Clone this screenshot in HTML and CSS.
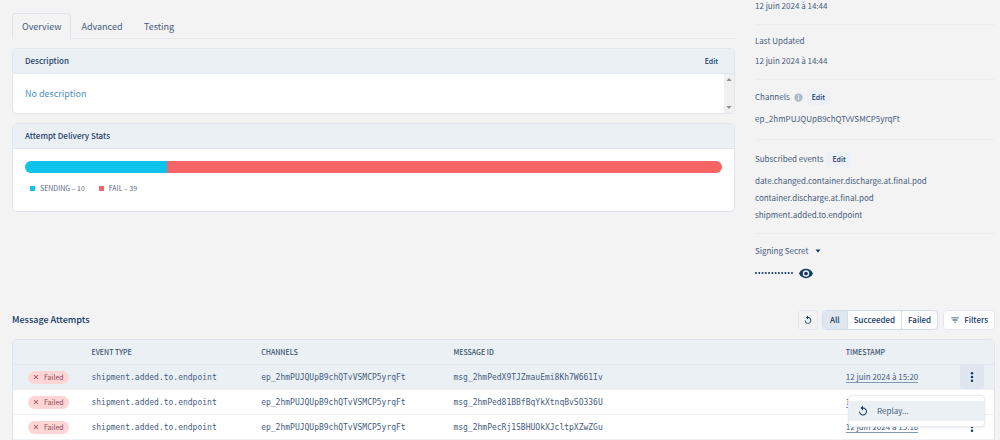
FILE: index.html
```html
<!DOCTYPE html>
<html lang="en">
<head>
<meta charset="utf-8">
<title>Endpoint</title>
<link rel="stylesheet" href="styles.css">
</head>
<body>
<svg class="defs" aria-hidden="true">
  <symbol id="replay" viewBox="0 0 24 24"><path d="M12 5V1L7 6l5 5V7c3.300 0 6 2.700 6 6s-2.700 6-6 6-6-2.700-6-6H4c0 4.400 3.600 8 8 8s8-3.600 8-8-3.600-8-8-8z"/></symbol>
  <symbol id="dots" viewBox="0 0 24 24"><circle cx="12" cy="3" r="3"/><circle cx="12" cy="12" r="3"/><circle cx="12" cy="21" r="3"/></symbol>
  <symbol id="cross" viewBox="0 0 24 24"><path d="M19 6.400 17.600 5 12 10.600 6.400 5 5 6.400 10.600 12 5 17.600 6.400 19 12 13.400 17.600 19 19 17.600 13.400 12z"/></symbol>
</svg>
<main class="page">
  <div class="columns">
    <div class="primary">
      <nav class="tabs">
        <button class="tab tab-active">Overview</button>
        <button class="tab">Advanced</button>
        <button class="tab">Testing</button>
      </nav>
      <section class="card">
        <header class="card-head"><h2>Description</h2><button class="edit edit-plain">Edit</button></header>
        <div class="description">
          <p>No description</p>
          <div class="scrollbar">
            <svg viewBox="0 0 10 6"><path d="M5 1 7.500 4h-5z"/></svg>
            <svg viewBox="0 0 10 6"><path d="M5 5 7.500 2h-5z"/></svg>
          </div>
        </div>
      </section>
      <section class="card">
        <header class="card-head"><h2>Attempt Delivery Stats</h2></header>
        <div class="stats">
          <div class="bar"><span class="sending" style="width:20.4%"></span><span class="fail"></span></div>
          <ul class="legend">
            <li><i class="sending"></i>SENDING – 10</li>
            <li><i class="fail"></i>FAIL – 39</li>
          </ul>
        </div>
      </section>
    </div>
    <aside class="details">
      <section class="created"><p>12 juin 2024 à 14:44</p></section>
      <section class="updated"><h3>Last Updated</h3><p>12 juin 2024 à 14:44</p></section>
      <section class="channels">
        <div class="label-row"><h3>Channels</h3>
          <svg class="info" viewBox="0 0 24 24"><path fill-rule="evenodd" d="M12 1a11 11 0 1 0 0 22 11 11 0 0 0 0-22zm-1.500 5h3v3h-3zm0 5h3v7h-3z"/></svg>
          <button class="edit">Edit</button></div>
        <p>ep_2hmPUJQUpB9chQTvVSMCP5yrqFt</p>
      </section>
      <section class="events">
        <div class="label-row"><h3>Subscribed events</h3><button class="edit">Edit</button></div>
        <ul><li>date.changed.container.discharge.at.final.pod</li><li>container.discharge.at.final.pod</li><li>shipment.added.to.endpoint</li></ul>
      </section>
      <section class="secret">
        <button class="label-row secret-toggle">Signing Secret<svg viewBox="0 0 10 10"><path d="M2.500 3.500h5L5 6.500z"/></svg></button>
        <div class="secret-value"><svg class="mask" viewBox="0 0 39 4"><path d="M1 2h37" stroke-dasharray="0 3.270"/></svg>
          <button class="reveal" aria-label="Show secret"><svg viewBox="0 0 24 18"><path fill-rule="evenodd" d="M12 1C6.500 1 2 4.300 0 9c2 4.700 6.500 8 12 8s10-3.300 12-8c-2-4.700-6.500-8-12-8zm0 13.500a5.500 5.500 0 1 1 0-11 5.500 5.500 0 0 1 0 11z"/><circle cx="12" cy="9" r="3.200"/></svg></button>
        </div>
      </section>
    </aside>
  </div>

  <div class="attempts-head">
    <h1>Message Attempts</h1>
    <button class="tool refresh" aria-label="Refresh"><svg><use href="#replay"/></svg></button>
    <div class="segments"><button class="selected">All</button><button>Succeeded</button><button>Failed</button></div>
    <button class="tool filters"><svg viewBox="0 0 24 24"><path d="M10 18h4v-2h-4zM3 6v2h18V6zm3 7h12v-2H6z"/></svg>Filters</button>
  </div>

  <div class="table-wrap">
    <table>
      <colgroup><col class="c-status"><col class="c-type"><col class="c-channel"><col class="c-id"><col class="c-time"><col class="c-menu"></colgroup>
      <thead><tr><th></th><th>EVENT TYPE</th><th>CHANNELS</th><th>MESSAGE ID</th><th>TIMESTAMP</th><th></th></tr></thead>
      <tbody>
        <tr class="active">
          <td><span class="badge"><svg><use href="#cross"/></svg>Failed</span></td>
          <td class="code">shipment.added.to.endpoint</td><td class="code">ep_2hmPUJQUpB9chQTvVSMCP5yrqFt</td><td class="code">msg_2hmPedX9TJZmauEmi8Kh7W661Iv</td>
          <td><time>12 juin 2024 à 15:20</time></td>
          <td class="menu-cell"><button class="more" aria-label="Actions"><svg><use href="#dots"/></svg></button>
            <div class="menu"><button><svg><use href="#replay"/></svg>Replay...</button></div></td>
        </tr>
        <tr>
          <td><span class="badge"><svg><use href="#cross"/></svg>Failed</span></td>
          <td class="code">shipment.added.to.endpoint</td><td class="code">ep_2hmPUJQUpB9chQTvVSMCP5yrqFt</td><td class="code">msg_2hmPed81BBfBqYkXtnqBvSO336U</td>
          <td><time>12 juin 2024 à 15:19</time></td>
          <td class="menu-cell"><button class="more" aria-label="Actions"><svg><use href="#dots"/></svg></button></td>
        </tr>
        <tr>
          <td><span class="badge"><svg><use href="#cross"/></svg>Failed</span></td>
          <td class="code">shipment.added.to.endpoint</td><td class="code">ep_2hmPUJQUpB9chQTvVSMCP5yrqFt</td><td class="code">msg_2hmPecRj1SBHUOkXJcltpXZwZGu</td>
          <td><time>12 juin 2024 à 15:18</time></td>
          <td class="menu-cell"><button class="more" aria-label="Actions"><svg><use href="#dots"/></svg></button></td>
        </tr>
      </tbody>
    </table>
  </div>
</main>
</body>
</html>
```
FILE: styles.css
```css
* { box-sizing: border-box; }
body { margin: 0; background: #f3f3f3; color: #455c7e; font: 8px/14px "Noto Sans CJK JP", "Noto Sans", sans-serif; overflow: hidden; }
h1, h2, h3, p, ul { margin: 0; padding: 0; font-size: inherit; font-weight: 400; list-style: none; }
button { margin: 0; padding: 0; border: 0; background: none; color: inherit; font: inherit; cursor: pointer; }
svg { display: block; fill: #123a68; flex: none; }
.defs { position: absolute; width: 0; height: 0; }
.page { padding: 0 5px 0 12px; }

.columns { display: grid; grid-template-columns: minmax(0, 1fr) 240px; gap: 20px; }
.primary { padding-top: 13px; min-width: 0; }

.tabs { display: flex; border-bottom: 1px solid #e6e8ee; margin-bottom: 9px; }
.tab { min-width: 53px; height: 26px; margin-bottom: -1px; padding: 2px 9px 0; border: 1px solid transparent; font-size: 9px; }
.tab-active { border-color: #e1e4ec; border-bottom-color: #f3f3f3; border-radius: 4px 4px 0 0; }

.card { border: 1px solid #e0e5ee; border-radius: 5px; background: #fff; overflow: hidden; margin-bottom: 9px; }
.card-head { display: flex; align-items: center; justify-content: space-between; height: 25px; padding: 0 12px; background: #ebf0f5; border-bottom: 1px solid #e0e5ee; }
.card-head h2 { color: #23416a; font-weight: 500; }
.edit { height: 15px; padding: 0 5px; border-radius: 3px; background: #ebf1f7; color: #123a68; font-size: 7px; font-weight: 500; }
.edit-plain { padding: 0 4px; background: none; }
.description { display: flex; height: 39px; color: #4a90c4; font-size: 9px; }
.description p { flex: 1; padding: 13px 12px 0; }
.scrollbar { display: flex; flex-direction: column; justify-content: space-between; width: 10px; padding: 3px 0; background: #f0f0f0; }
.scrollbar svg { width: 10px; height: 6px; fill: #8c8c8c; }
.stats { padding: 12px 12px 16px; }
.bar { display: flex; height: 12px; border-radius: 6px; overflow: hidden; }
.bar .fail { flex: 1; }
.sending { background: #0cc3ec; }
.fail { background: #f66565; }
.legend { display: flex; gap: 14px; padding: 8px 5px 0; font-size: 7px; color: #5a6880; }
.legend li { display: flex; align-items: center; gap: 5px; }
.legend i { width: 5px; height: 5px; }

.details section { border-bottom: 1px solid #ebecef; }
.details .created { padding-bottom: 12px; line-height: 12px; }
.details .updated { padding: 9px 0 11px; }
.updated h3 { margin-bottom: 6px; }
.details .channels { padding: 9px 0 13px; }
.label-row { display: flex; align-items: center; height: 16px; gap: 4px; }
.channels .label-row { margin-bottom: 7px; }
.info { width: 9px; height: 9px; fill: #a9bac9; }
.details .events { padding: 11px 0 10px; }
.events .label-row { margin-bottom: 5px; }
.events li { line-height: 17px; }
.details .secret { padding-top: 9px; border: 0; }
.secret-toggle { gap: 5px; margin-bottom: 6px; }
.secret-toggle svg { width: 10px; height: 10px; }
.secret-value { display: flex; align-items: center; height: 16px; gap: 5px; }
.mask { width: 39px; height: 4px; stroke: #123a68; stroke-width: 2; stroke-linecap: round; }
.reveal svg { width: 14px; height: 11px; }

.attempts-head { display: flex; align-items: center; height: 20px; margin: 29px 0 9px; color: #123a68; }
.attempts-head h1 { flex: 1; font-size: 9px; font-weight: 500; }
.attempts-head button { font-weight: 500; }
.tool { display: flex; align-items: center; justify-content: center; height: 20px; border: 1px solid #e4e7ed; border-radius: 4px; }
.tool svg { width: 10px; height: 10px; }
.refresh { width: 20px; margin-right: 4px; }
.filters { gap: 4px; padding: 0 6px; background: #fff; }
.segments { display: flex; height: 20px; margin-right: 5px; border: 1px solid #d5dbe8; border-radius: 4px; background: #fff; overflow: hidden; }
.segments button { padding: 0 6px; }
.segments button + button { border-left: 1px solid #d5dbe8; }
.segments .selected { padding: 0 7px; background: #e0e6f0; }

.table-wrap { border: 1px solid #e0e4ee; border-radius: 4px 4px 0 0; background: #fff; }
table { width: 100%; border-collapse: separate; border-spacing: 0; table-layout: fixed; }
.c-status { width: 8%; }
.c-type { width: 17.300%; }
.c-channel { width: 19.600%; }
.c-id { width: 40%; }
.c-menu { width: 34px; }
th, td { height: 25px; padding: 0; border-bottom: 1px solid #edf0f5; text-align: left; }
th { background: #ebf0f5; border-bottom-color: #e0e4ee; color: #3c5070; font-size: 7px; font-weight: 500; }
.active td { background: #ebf0f5; }
.code { padding-top: 2px; font: 8px/14px "DejaVu Sans Mono", monospace; }
td:first-child { padding-left: 15px; }
.badge { display: flex; align-items: center; width: 41px; height: 13px; padding-left: 4px; gap: 4px; border-radius: 7px; background: #ffd5d5; color: #8d4a56; font-size: 7px; }
.badge svg { width: 8px; height: 8px; fill: #9a3b44; }
time { border-bottom: 1px solid #7f99b6; }
.menu-cell { position: relative; }
.more { display: flex; align-items: center; justify-content: center; width: 24px; height: 24px; border-radius: 3px; }
.more svg { width: 10px; height: 10px; }
.active .more { background: #dfe6ef; }
.menu { position: absolute; z-index: 1; top: 30px; right: 9px; width: 137px; padding: 5px 0; border: 1px solid #e8ecf2; border-radius: 4px; background: #fff; box-shadow: 0 1px 2px #1f3f6618; }
.menu button { display: flex; align-items: center; gap: 8px; width: 100%; height: 20px; padding-left: 8px; background: #ebf0f5; }
.menu svg { width: 12px; height: 12px; }
```
